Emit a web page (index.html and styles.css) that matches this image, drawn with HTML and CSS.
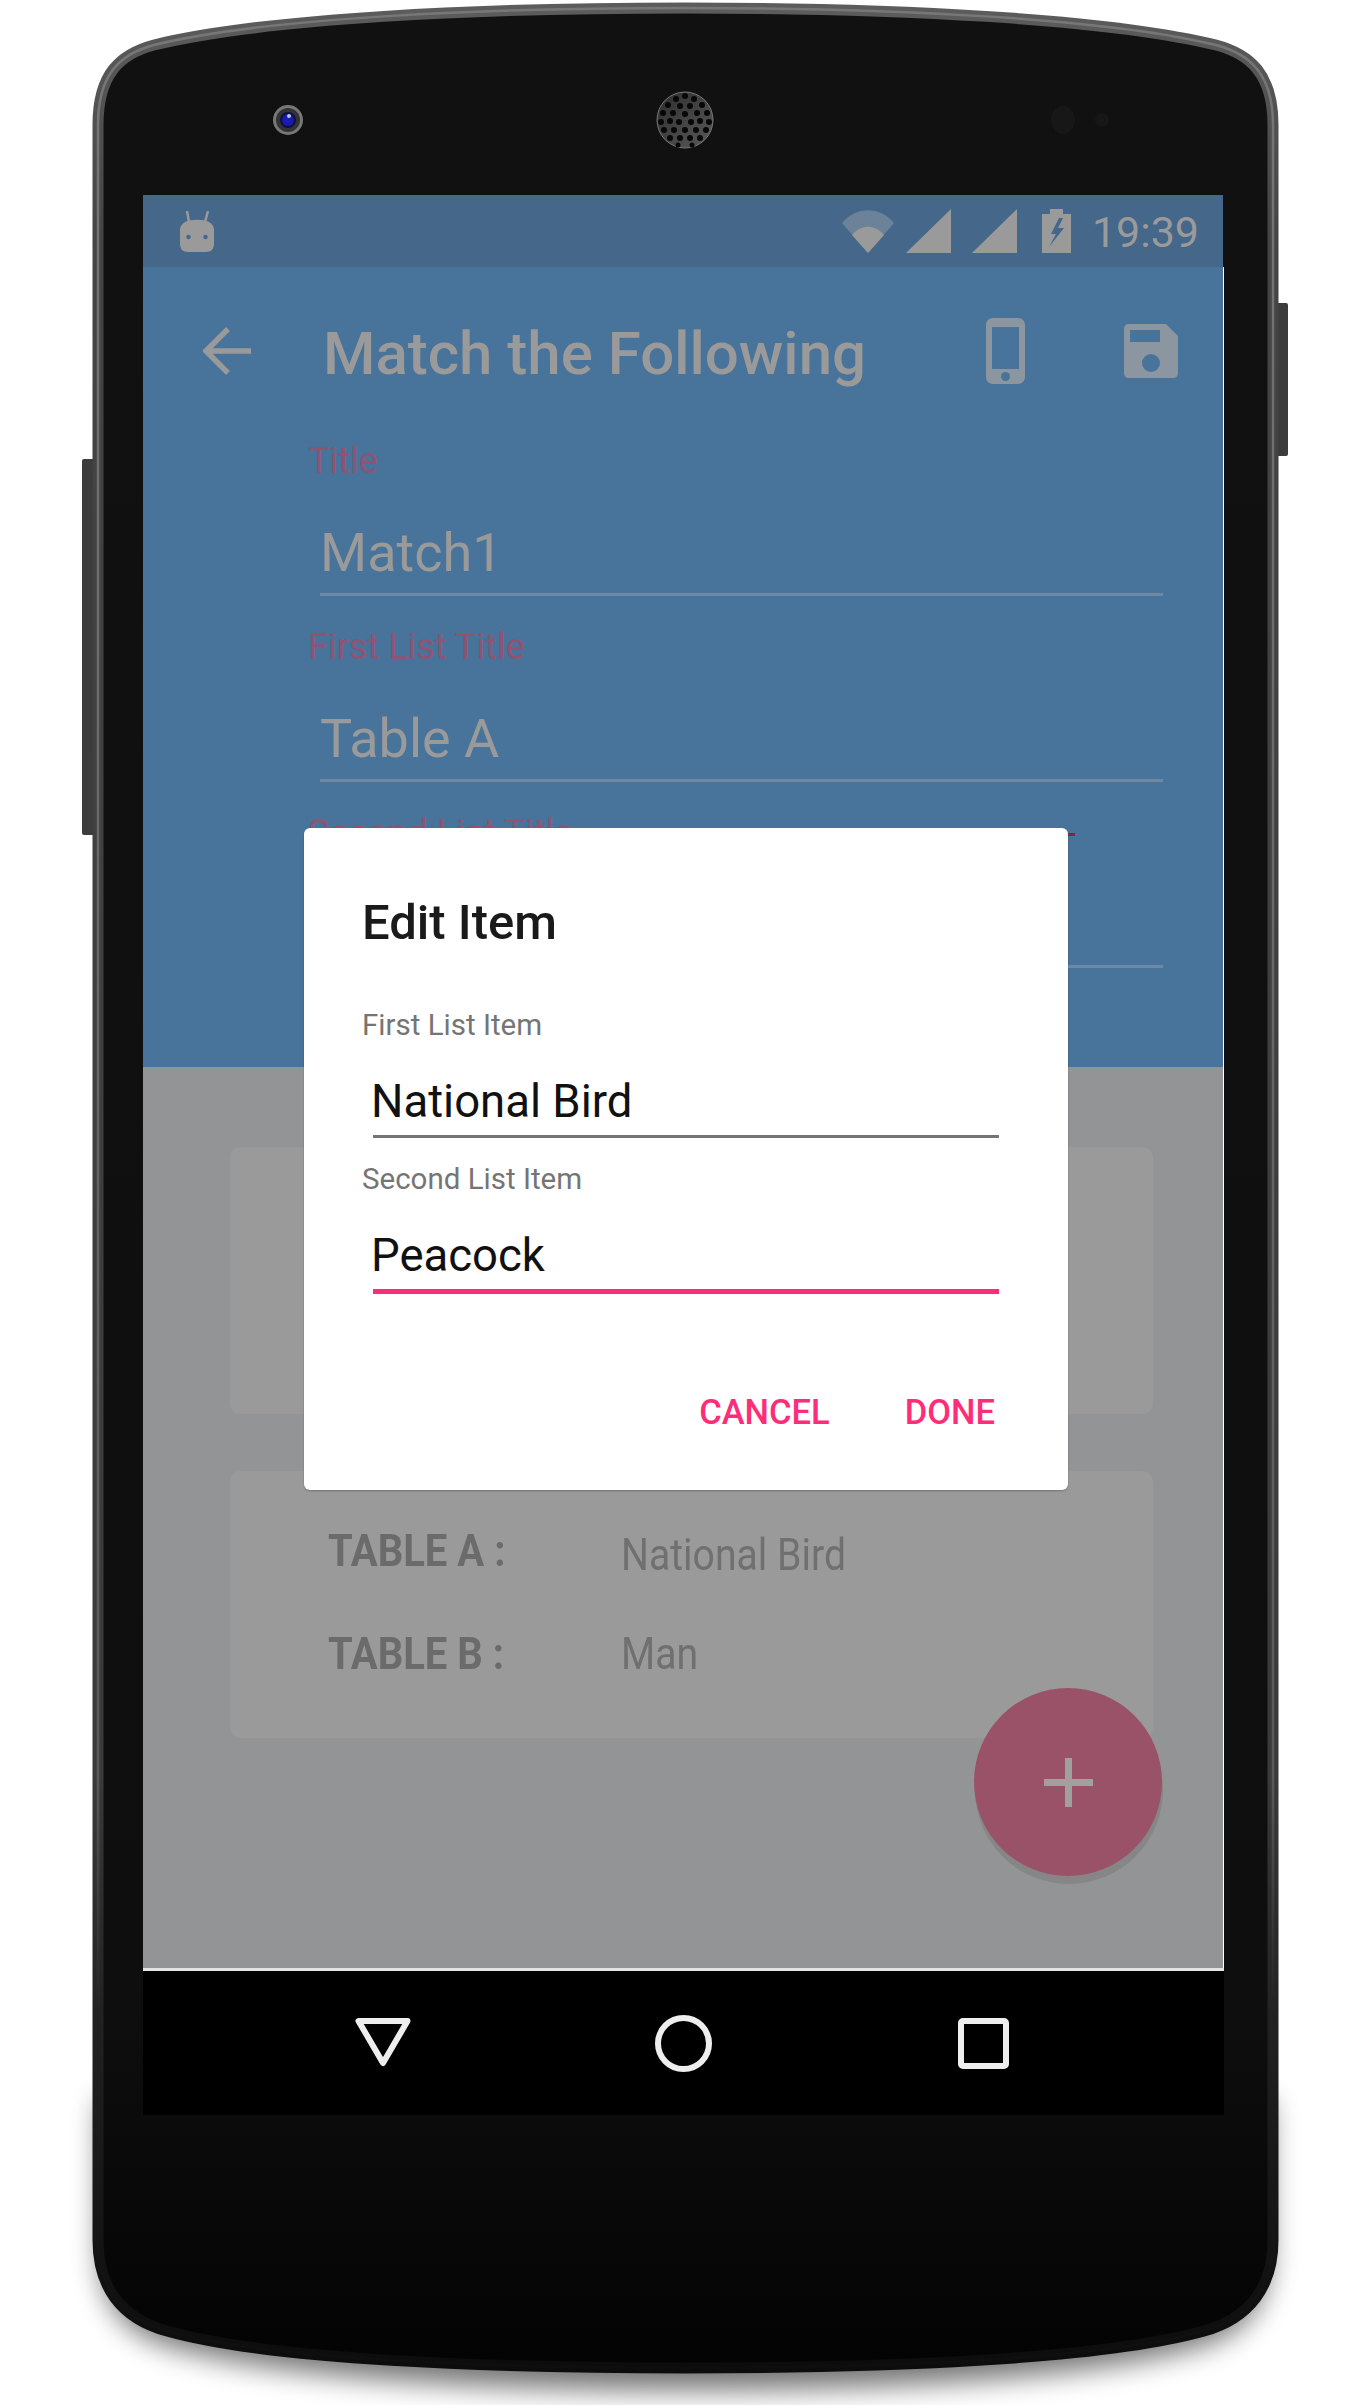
FILE: index.html
```html
<!DOCTYPE html>
<html>

<head>
    <meta charset="utf-8">
    <title>Match the Following</title>
    <link rel="stylesheet" href="styles.css">
</head>

<body>
    <div class="phone">
        <!-- Phone body, drawn behind everything else -->
        <svg class="shell" width="1370" height="2405" viewBox="0 0 1370 2405">
            <defs>
                <linearGradient id="rim" x1="0" y1="0" x2="0" y2="1">
                    <stop offset="0" stop-color="#5c5c5c" />
                    <stop offset="0.1" stop-color="#444" />
                    <stop offset="0.75" stop-color="#3a3a3a" />
                    <stop offset="0.85" stop-color="#222" />
                    <stop offset="1" stop-color="#0c0c0c" />
                </linearGradient>
                <linearGradient id="shine" x1="0" y1="0" x2="0" y2="1">
                    <stop offset="0" stop-color="#777" />
                    <stop offset="0.75" stop-color="#5a5a5a" />
                    <stop offset="0.85" stop-color="#222" />
                    <stop offset="1" stop-color="#0e0e0e" />
                </linearGradient>
                <linearGradient id="face" x1="0" y1="0" x2="0" y2="1">
                    <stop offset="0" stop-color="#111" />
                    <stop offset="0.85" stop-color="#0e0e0e" />
                    <stop offset="1" stop-color="#030303" />
                </linearGradient>
                <filter id="soft" x="-10%" y="-10%" width="120%" height="120%">
                    <feGaussianBlur stdDeviation="14" />
                </filter>
                <path id="body"
                    d="M98 2240 V125 C98 74 120 54 154 45 C264 18 480 8 685 8 C890 8 1106 18 1216 45 C1250 54 1273 74 1273 125 V2240 C1273 2286 1250 2318 1204 2331 C1100 2360 880 2368 685 2368 C490 2368 270 2360 167 2331 C120 2318 98 2286 98 2240 Z" />
            </defs>
            <path class="drop" filter="url(#soft)"
                d="M100 2100 H1270 V2250 C1270 2300 1250 2330 1205 2345 C1100 2378 880 2390 685 2390 C490 2390 270 2378 165 2345 C120 2330 100 2300 100 2250 Z" />
            <rect class="key" x="82" y="459" width="14" height="376" rx="2" />
            <rect class="key" x="1274" y="303" width="14" height="153" rx="2" />
            <use href="#body" fill="url(#face)" stroke="url(#rim)" stroke-width="11" />
            <use href="#body" fill="none" stroke="url(#shine)" stroke-width="2.500" />
        </svg>

        <div class="bezel">
            <svg class="camera" width="32" height="32" viewBox="0 0 32 32">
                <circle cx="16" cy="16" r="15" fill="#777" />
                <circle cx="16" cy="16" r="12" fill="#333" />
                <circle cx="16" cy="16" r="8" fill="#101040" />
                <circle cx="16" cy="16" r="6" fill="#1a1ab0" />
                <circle cx="17" cy="12" r="2" fill="#b9c4e8" />
            </svg>
            <svg class="speaker" width="58" height="58" viewBox="0 0 58 58">
                <defs>
                    <linearGradient id="mesh" x1="0" y1="0" x2="1" y2="1">
                        <stop offset="0" stop-color="#2c2c2c" />
                        <stop offset="1" stop-color="#5a5a5a" />
                    </linearGradient>
                </defs>
                <circle cx="29" cy="29" r="28" fill="url(#mesh)" stroke="#777" stroke-width="1" />
                <g fill="#070707">
                    <circle cx="29" cy="5" r="3" /><circle cx="20" cy="8" r="3" /><circle cx="38" cy="8" r="3" />
                    <circle cx="12" cy="14" r="3" /><circle cx="24" cy="15" r="3" /><circle cx="34" cy="15" r="3" /><circle cx="46" cy="14" r="3" />
                    <circle cx="7" cy="22" r="3" /><circle cx="17" cy="22" r="3" /><circle cx="29" cy="23" r="3" /><circle cx="41" cy="22" r="3" /><circle cx="51" cy="22" r="3" />
                    <circle cx="5" cy="31" r="3" /><circle cx="14" cy="30" r="3" /><circle cx="23" cy="31" r="3" /><circle cx="35" cy="31" r="3" /><circle cx="44" cy="30" r="3" /><circle cx="53" cy="31" r="3" />
                    <circle cx="8" cy="39" r="3" /><circle cx="18" cy="39" r="3" /><circle cx="29" cy="39" r="3" /><circle cx="40" cy="39" r="3" /><circle cx="50" cy="39" r="3" />
                    <circle cx="14" cy="47" r="3" /><circle cx="24" cy="47" r="3" /><circle cx="34" cy="47" r="3" /><circle cx="44" cy="47" r="3" />
                    <circle cx="22" cy="54" r="2.500" /><circle cx="36" cy="54" r="2.500" />
                </g>
            </svg>
            <div class="sensor big"></div>
            <div class="sensor"></div>
        </div>

        <div class="screen">
            <div class="status">
                <svg class="bot" width="34" height="41" viewBox="0 0 34 41">
                    <path d="M7 0 L9 11 M28 0 L25 11" stroke="#9a9a9a" stroke-width="2.500" fill="none" />
                    <path fill="#9a9a9a" d="M5 11 C10 8 24 8 29 11 C32 13 34 15 34 19 V33 C34 38 31 41 26 41 H8 C3 41 0 38 0 33 V19 C0 15 2 13 5 11 Z" />
                    <circle cx="8.500" cy="26" r="2.200" fill="#44678a" />
                    <circle cx="25.500" cy="26" r="2.200" fill="#44678a" />
                </svg>
                <div class="status-right">
                    <svg class="wifi" width="52" height="43" viewBox="0 0 52 43">
                        <path fill="#6c8299" d="M0 13 C14 -4 38 -4 52 13 L26 43 Z" />
                        <path fill="#9a9a9a" d="M10 25 C19 14 33 14 42 25 L26 43 Z" />
                    </svg>
                    <svg class="signal" width="45" height="44" viewBox="0 0 45 44">
                        <path fill="#9a9a9a" d="M45 0 V44 H0 Z" />
                    </svg>
                    <svg class="signal" width="45" height="44" viewBox="0 0 45 44">
                        <path fill="#9a9a9a" d="M45 0 V44 H0 Z" />
                    </svg>
                    <svg class="battery" width="29" height="44" viewBox="0 0 29 44">
                        <path fill="#9a9a9a" d="M8 0 H21 V5 H29 V44 H0 V5 H8 Z" />
                        <path fill="#44678a" d="M17 9 L9 25 H14 L7 38 L22 19 H16 L21 9 Z" />
                    </svg>
                    <span class="clock">19:39</span>
                </div>
            </div>

            <div class="content">
                <div class="editor">
                    <div class="appbar">
                        <svg class="back" width="48" height="48" viewBox="0 0 48 48">
                            <path d="M48 24 H4 M25 2 L3 24 L25 46" fill="none" stroke="#9a9a9a" stroke-width="5.500" />
                        </svg>
                        <h1 class="appbar-title">Match the Following</h1>
                        <svg class="action-phone" width="39" height="66" viewBox="0 0 39 66">
                            <path fill="#8c96a0" fill-rule="evenodd"
                                d="M7 0 H32 C36 0 39 3 39 7 V59 C39 63 36 66 32 66 H7 C3 66 0 63 0 59 V7 C0 3 3 0 7 0 Z M6 9 V51 H33 V9 Z" />
                            <circle cx="19.500" cy="58.500" r="4.500" fill="#48739a" />
                        </svg>
                        <svg class="action-save" width="54" height="54" viewBox="0 0 54 54">
                            <path fill="#8c96a0" fill-rule="evenodd"
                                d="M5 0 H42 L54 12 V49 C54 52 52 54 49 54 H5 C2 54 0 52 0 49 V5 C0 2 2 0 5 0 Z M6 6 V18 H36 V6 Z" />
                            <circle cx="27" cy="39" r="9" fill="#48739a" />
                        </svg>
                    </div>
                    <div class="form">
                        <label class="form-label">Title</label>
                        <div class="form-field">Match1</div>
                        <label class="form-label">First List Title</label>
                        <div class="form-field">Table A</div>
                        <label class="form-label">Second List Title</label>
                        <div class="form-field">&nbsp;</div>
                    </div>
                </div>

                <div class="lists">
                    <div class="card"></div>
                    <div class="card">
                        <div class="row row-first">
                            <span class="row-key">TABLE A :</span>
                            <span class="row-value">National Bird</span>
                        </div>
                        <div class="row">
                            <span class="row-key">TABLE B :</span>
                            <span class="row-value">Man</span>
                        </div>
                    </div>
                    <div class="fab">
                        <svg width="49" height="49" viewBox="0 0 49 49">
                            <path d="M24.500 0 V49 M0 24.500 H49" stroke="#a0a0a0" stroke-width="7" />
                        </svg>
                    </div>
                </div>
            </div>

            <div class="navbar">
                <svg width="56" height="50" viewBox="0 0 56 50">
                    <path d="M3.500 3 H52.500 L28 45 Z" fill="none" stroke="#eee" stroke-width="6" stroke-linejoin="round" />
                </svg>
                <svg width="57" height="57" viewBox="0 0 57 57">
                    <circle cx="28.500" cy="28.500" r="25.500" fill="none" stroke="#eee" stroke-width="6" />
                </svg>
                <svg width="51" height="51" viewBox="0 0 51 51">
                    <rect x="3" y="3" width="45" height="45" rx="2" fill="none" stroke="#eee" stroke-width="6" />
                </svg>
            </div>

            <!-- Edit dialog on top of the dimmed screen -->
            <div class="dialog">
                <h2 class="dialog-title">Edit Item</h2>
                <div class="dialog-label">First List Item</div>
                <div class="dialog-input">National Bird</div>
                <div class="dialog-label">Second List Item</div>
                <div class="dialog-input focused">Peacock</div>
                <div class="dialog-actions">
                    <span class="dialog-btn">CANCEL</span>
                    <span class="dialog-btn">DONE</span>
                </div>
            </div>
        </div>
    </div>
</body>

</html>
```

FILE: styles.css
```css
/* Phone frame */
body {
    font-family: Roboto, "Liberation Sans", sans-serif;
    background-color: #fff;
    margin: 0;
    padding: 0;
}

.phone {
    position: relative;
    width: 1370px;
    height: 2405px;
    overflow: hidden;
}

.shell {
    position: absolute;
    top: 0;
    left: 0;
}

.drop {
    fill: #000;
    opacity: 0.55;
}

.key {
    fill: #3c3c3c;
}

.bezel {
    position: relative;
    height: 150px;
    padding-top: 45px;
    padding-left: 272px;
    display: flex;
    align-items: center;
}

.camera {
    margin-right: 352px;
}

.speaker {
    margin-right: 337px;
}

.sensor {
    width: 14px;
    height: 14px;
    border-radius: 50%;
    background-color: #171717;
}

.sensor.big {
    width: 24px;
    height: 28px;
    margin-right: 20px;
}

/* Screen */
.screen {
    position: relative;
    width: 1081px;
    margin-left: 143px;
}

.status {
    height: 72px;
    margin-right: 1px;
    background-color: #44678a;
    display: flex;
    align-items: center;
    justify-content: space-between;
    padding-left: 37px;
    box-sizing: border-box;
}

.status-right {
    display: flex;
    align-items: center;
    padding-right: 24px;
}

.wifi {
    margin-right: 12px;
}

.signal {
    margin-right: 21px;
}

.battery {
    margin-left: 4px;
    margin-right: 21px;
}

.clock {
    font-size: 43px;
    line-height: 44px;
    padding-top: 2px;
    color: #9a9a9a;
}

.content {
    border-right: 1px solid #fff;
}

.editor {
    height: 800px;
    background-color: #48739a;
}

.appbar {
    height: 168px;
    display: flex;
    align-items: center;
}

.back {
    margin-left: 60px;
}

.appbar-title {
    margin: 0 0 0 72px;
    padding-top: 5px;
    width: 663px;
    font-size: 60px;
    font-weight: 500;
    color: #9a9a9a;
    white-space: nowrap;
}

.action-save {
    margin-left: 99px;
}

.form {
    display: flex;
    flex-direction: column;
    padding-top: 6px;
}

.form-label {
    margin-left: 165px;
    font-size: 36px;
    line-height: 40px;
    color: #8f5374;
}

.form-field {
    margin-left: 177px;
    margin-bottom: 31px;
    width: 843px;
    padding-top: 42px;
    padding-bottom: 10px;
    font-size: 54px;
    line-height: 60px;
    color: #9a9a9a;
    border-bottom: 3px solid #6d8aa5;
}

.lists {
    position: relative;
    height: 901px;
    box-sizing: border-box;
    padding: 80px 70px 0 87px;
    background-color: #939495;
    display: flex;
    flex-direction: column;
    gap: 57px;
}

.card {
    height: 267px;
    box-sizing: border-box;
    padding: 55px 0 0 98px;
    background-color: #9a9a9a;
    border-radius: 10px;
}

.row {
    height: 50px;
    margin-bottom: 53px;
    display: flex;
    line-height: 50px;
    white-space: nowrap;
}

.row-key {
    width: 293px;
    font-size: 45px;
    font-weight: 700;
    color: #6b6b6b;
    transform: scaleX(0.89);
    transform-origin: left;
}

.row-value {
    font-size: 44px;
    color: #707070;
    transform: scaleX(0.89);
    transform-origin: left;
}

.row-first .row-value {
    padding-top: 4px;
}

.fab {
    position: absolute;
    left: 831px;
    top: 621px;
    width: 188px;
    height: 188px;
    border-radius: 50%;
    background-color: #9a5269;
    box-shadow: 1px 8px 0 #868686;
    display: flex;
    align-items: center;
    justify-content: center;
}

.navbar {
    margin-top: 3px;
    height: 144px;
    background-color: #000;
    box-shadow: 0 -3px 0 #e4e4e4;
    position: relative;
    box-sizing: border-box;
    padding-left: 212px;
    display: flex;
    align-items: center;
    gap: 244px;
}

.navbar svg + svg + svg {
    margin-left: 2px;
}

/* Dialog */
.dialog {
    position: absolute;
    left: 161px;
    top: 633px;
    width: 764px;
    height: 662px;
    box-sizing: border-box;
    padding: 67px 0 0 58px;
    background-color: #fff;
    border-radius: 6px;
    box-shadow: 0 1px 2px rgba(0, 0, 0, 0.25);
}

.dialog::after {
    content: "";
    position: absolute;
    left: 764px;
    top: 5px;
    width: 7px;
    height: 3px;
    background-color: #8a2050;
}

.dialog-title {
    margin: 0 0 56px 0;
    font-size: 49px;
    line-height: 56px;
    font-weight: 500;
    color: #1a1a1a;
}

.dialog-label {
    font-size: 29.500px;
    line-height: 36px;
    color: #757575;
}

.dialog-input {
    margin: 0 0 23px 11px;
    width: 626px;
    padding: 31px 0 5px 0;
    font-size: 45.500px;
    line-height: 56px;
    text-indent: -2px;
    color: #111;
    border-bottom: 3px solid #757575;
}

.dialog-input.focused {
    border-bottom: 5px solid #ff2d78;
    margin-bottom: 0;
}

.dialog-actions {
    margin-top: 98px;
    padding-right: 73px;
    display: flex;
    justify-content: flex-end;
    gap: 75px;
}

.dialog-btn {
    font-size: 34.500px;
    line-height: 40px;
    font-weight: 500;
    color: #ff2d78;
}
```
